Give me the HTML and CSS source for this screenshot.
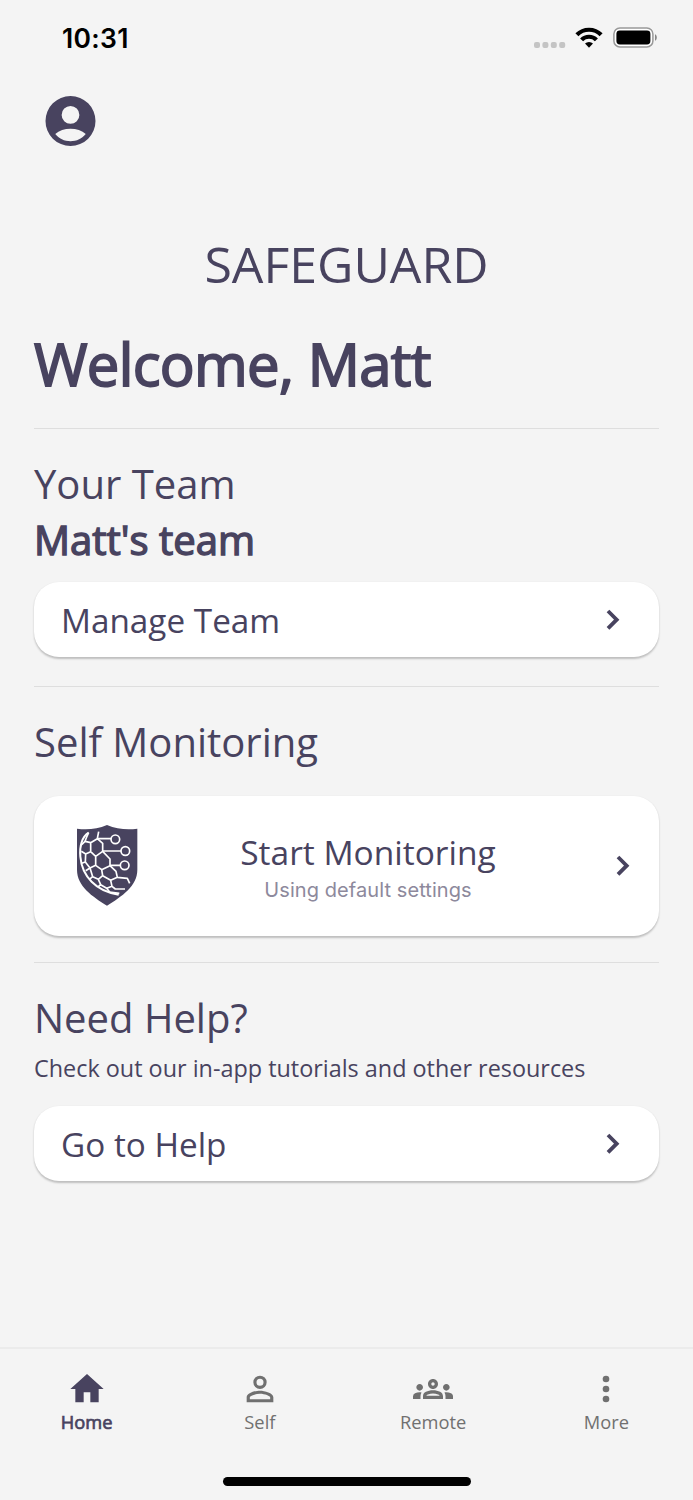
FILE: index.html
```html
<!DOCTYPE html>
<html lang="en">
<head>
<meta charset="utf-8">
<title>Safeguard</title>
<link rel="stylesheet" href="styles.css">
</head>
<body>
<div class="screen">
  <header class="status">
    <span class="time">10:31</span>
    <div class="indicators">
      <svg class="dots" width="32" height="8" viewBox="0 0 32 8" fill="#c4c4c4"><rect x="0" y="1" width="6" height="6" rx="2"/><rect x="8.4" y="1" width="6" height="6" rx="2"/><rect x="16.8" y="1" width="6" height="6" rx="2"/><rect x="25.2" y="1" width="6" height="6" rx="2"/></svg>
      <svg class="wifi" width="28" height="21" viewBox="0 0 28 21"><g fill="none" stroke="#000" stroke-width="4.200"><path d="M1.900 7.800a17 17 0 0 1 24.200 0"/><path d="M6.600 12.900a10.300 10.300 0 0 1 14.800 0"/></g><path d="M14 20.700l-4-4.200a5.800 5.800 0 0 1 8 0z"/></svg>
      <svg class="battery" width="45" height="21" viewBox="0 0 45 21"><rect x=".9" y=".9" width="39" height="19" rx="6" fill="#fff" stroke="#999" stroke-width="1.500"/><rect x="3.400" y="3.400" width="34" height="14" rx="3.400"/><path d="M42 7.200c2.400 1 2.400 5.600 0 6.600z" fill="#888"/></svg>
    </div>
  </header>
  <div class="account">
    <svg width="51" height="50" viewBox="1.900 2 20.200 20" fill="#48435f"><path d="M12 2a10 10 0 1 0 0 20 10 10 0 0 0 0-20zm0 4a3.550 3.550 0 1 1 0 7.100A3.550 3.550 0 0 1 12 6zm0 14.100c-2.400 0-4.700-1.100-6.100-2.900 1.500-1.400 3.800-2.100 6.100-2.100s4.600.7 6.100 2.100c-1.400 1.800-3.700 2.900-6.100 2.900z"/></svg>
  </div>
  <main>
    <div class="brand">SAFEGUARD</div>
    <h1>Welcome, Matt</h1>
    <section class="team">
      <h2>Your Team</h2>
      <h3>Matt's team</h3>
      <a class="row"><span>Manage Team</span><svg class="chev" width="14" height="22" viewBox="0 0 14 22"><path d="M2 2l8.700 8.700L2 19.400"/></svg></a>
    </section>
    <section class="self">
      <h2>Self Monitoring</h2>
      <a class="card">
        <svg class="shield" width="62" height="82" viewBox="21 21 186 246">
          <path d="M111 21C140 33 170 36 202 32V155C202 205 155 235 111 263C67 235 21 205 21 155V32C53 36 82 33 111 21z" fill="#48435f"/>
          <g fill="none" stroke="#fff" stroke-width="5" stroke-linejoin="round">
            <path stroke-width="6" d="M56 44C36 56 28 85 31 116C36 175 78 220 146 230"/>
            <path d="M56 44Q50 56 45 70L35 80M45 70L62 74V101L47 108L34 100M62 74L82 62L98 76V100L77 115L62 101M86 41L82 62M77 115V142L60 150L46 132L47 108M46 132L35 136M98 100L120 123V143L95 155L77 142M60 150L68 176L85 184L98 173L95 155M60 150L47 158M68 176L58 184M120 143L138 160L142 178L122 187L98 173M122 187L126 205L110 211L92 200L85 184M92 200L84 207M142 178L172 181L179 196M126 205L136 213L165 213M110 211L119 222L148 226"/>
            <path d="M84 62H123M98 99H153M120 142H151"/>
            <circle cx="136" cy="64" r="13"/><circle cx="166" cy="99" r="13"/><circle cx="164" cy="142" r="13"/>
          </g>
        </svg>
        <div class="card-text"><span>Start Monitoring</span><span class="note">Using default settings</span></div>
        <svg class="chev" width="14" height="22" viewBox="0 0 14 22"><path d="M2 2l8.700 8.700L2 19.400"/></svg>
      </a>
    </section>
    <section class="help">
      <h2>Need Help?</h2>
      <p>Check out our in-app tutorials and other resources</p>
      <a class="row"><span>Go to Help</span><svg class="chev" width="14" height="22" viewBox="0 0 14 22"><path d="M2 2l8.700 8.700L2 19.400"/></svg></a>
    </section>
  </main>
  <nav class="tabs">
    <a class="tab active"><svg width="40" height="40" viewBox="0 0 24 24"><path d="M10 20v-6h4v6h5v-8h3L12 3 2 12h3v8z"/></svg><span>Home</span></a>
    <a class="tab"><svg width="40" height="40" viewBox="0 0 24 24"><path d="M12 5.900a2.100 2.100 0 1 1 0 4.200 2.100 2.100 0 0 1 0-4.200m0 9c2.970 0 6.100 1.460 6.100 2.100v1.100H5.900V17c0-.64 3.130-2.100 6.100-2.100M12 4a4 4 0 1 0 0 8 4 4 0 0 0 0-8zm0 9c-2.670 0-8 1.340-8 4v3h16v-3c0-2.660-5.330-4-8-4z"/></svg><span>Self</span></a>
    <a class="tab"><svg width="40" height="40" viewBox="0 0 24 24"><path d="M4 13c1.100 0 2-.9 2-2s-.9-2-2-2-2 .9-2 2 .9 2 2 2zm1.130 1.100c-.37-.06-.74-.1-1.130-.1-.99 0-1.930.21-2.780.58A2.010 2.010 0 0 0 0 16.430V18h4.500v-1.610c0-.83.23-1.610.63-2.290zM20 13c1.100 0 2-.9 2-2s-.9-2-2-2-2 .9-2 2 .9 2 2 2zm4 3.430c0-.81-.48-1.530-1.220-1.850A6.950 6.950 0 0 0 20 14c-.39 0-.76.04-1.130.1.4.68.63 1.460.63 2.290V18H24v-1.570zm-7.760-2.780c-1.170-.52-2.610-.9-4.240-.9s-3.070.39-4.240.9A2.988 2.988 0 0 0 6 16.390V18h12v-1.610c0-1.180-.68-2.260-1.760-2.740zM8.070 16c.09-.23.13-.39.91-.69.97-.38 1.990-.56 3.020-.56s2.050.18 3.020.56c.77.3.81.46.91.69H8.070zM12 8c.55 0 1 .45 1 1s-.45 1-1 1-1-.45-1-1 .45-1 1-1m0-2c-1.660 0-3 1.340-3 3s1.340 3 3 3 3-1.340 3-3-1.340-3-3-3z"/></svg><span>Remote</span></a>
    <a class="tab"><svg width="40" height="40" viewBox="0 0 24 24"><circle cx="12" cy="6" r="2"/><circle cx="12" cy="12" r="2"/><circle cx="12" cy="18" r="2"/></svg><span>More</span></a>
  </nav>
  <div class="home-bar"></div>
</div>
</body>
</html>
```
FILE: styles.css
```css
* { box-sizing: border-box; }
body { margin: 0; background: #f4f4f4; font-family: "Open Sans", sans-serif; color: #48435f; }
.screen { width: 693px; height: 1500px; display: flex; flex-direction: column; overflow: hidden; }
.status { height: 76px; display: flex; justify-content: space-between; padding: 0 35px 0 62px; color: #000; }
.time { font: 600 26.500px/77px Inter, sans-serif; letter-spacing: .3px; }
.indicators { display: flex; align-items: flex-start; }
.dots { margin: 41px 9.500px 0 0; }
.wifi { margin: 27px 10px 0 0; }
.battery { margin-top: 27px; }
.account { height: 153px; padding: 20px 0 0 45px; }
.account svg, .tab svg { display: block; }
main { height: 1118px; padding: 0 34px; white-space: nowrap; }
h1, h2, h3, p { margin: 0; font-weight: 400; }
.brand { height: 95px; line-height: 71px; font-size: 50px; text-align: center; }
h1 { height: 104px; line-height: 80px; font-size: 58px; letter-spacing: -.68px; -webkit-text-stroke: 1.800px #48435f; }
section { border-top: 1px solid #dedede; }
h2, h3 { height: 56px; font-size: 40px; line-height: 57px; }
h3 { -webkit-text-stroke: 1.400px #48435f; }
.team { height: 258px; padding-top: 26px; }
.self { height: 276px; padding-top: 26px; }
.help { padding-top: 26px; }
.row { display: flex; align-items: center; justify-content: space-between; height: 75px; padding: 0 39px 0 27px; background: #fff; border-radius: 25px; box-shadow: 0 1.500px 2px rgba(0,0,0,.22); font-size: 33.300px; }
.row span { padding-top: 1px; }
h3 + .row { margin-top: 15px; }
.chev { fill: none; stroke: #48435f; stroke-width: 3.800; }
.card { display: flex; align-items: center; height: 140px; margin-top: 27px; padding: 0 29px 0 43px; background: #fff; border-radius: 25px; box-shadow: 0 1.500px 2px rgba(0,0,0,.22); }
.card-text { flex: 1; display: flex; flex-direction: column; align-items: center; padding-right: 19px; font-size: 33.500px; line-height: 46px; }
.note { padding-top: 2px; font: 400 20px/27px Inter, sans-serif; color: #8d899c; letter-spacing: .08px; }
p { height: 61px; line-height: 46px; font-size: 23.400px; }
.tabs { height: 126px; display: flex; border-top: 2px solid #ebebeb; padding: 20px 0 0; }
.tab { flex: 1; display: flex; flex-direction: column; align-items: center; font-size: 18.300px; line-height: 26px; color: #707070; fill: #707070; }
.active { color: #48435f; fill: #48435f; -webkit-text-stroke: .7px #48435f; }
.active svg { stroke: none; }
.home-bar { width: 248px; height: 9px; margin: 4px auto 0; background: #000; border-radius: 5px; }
```
